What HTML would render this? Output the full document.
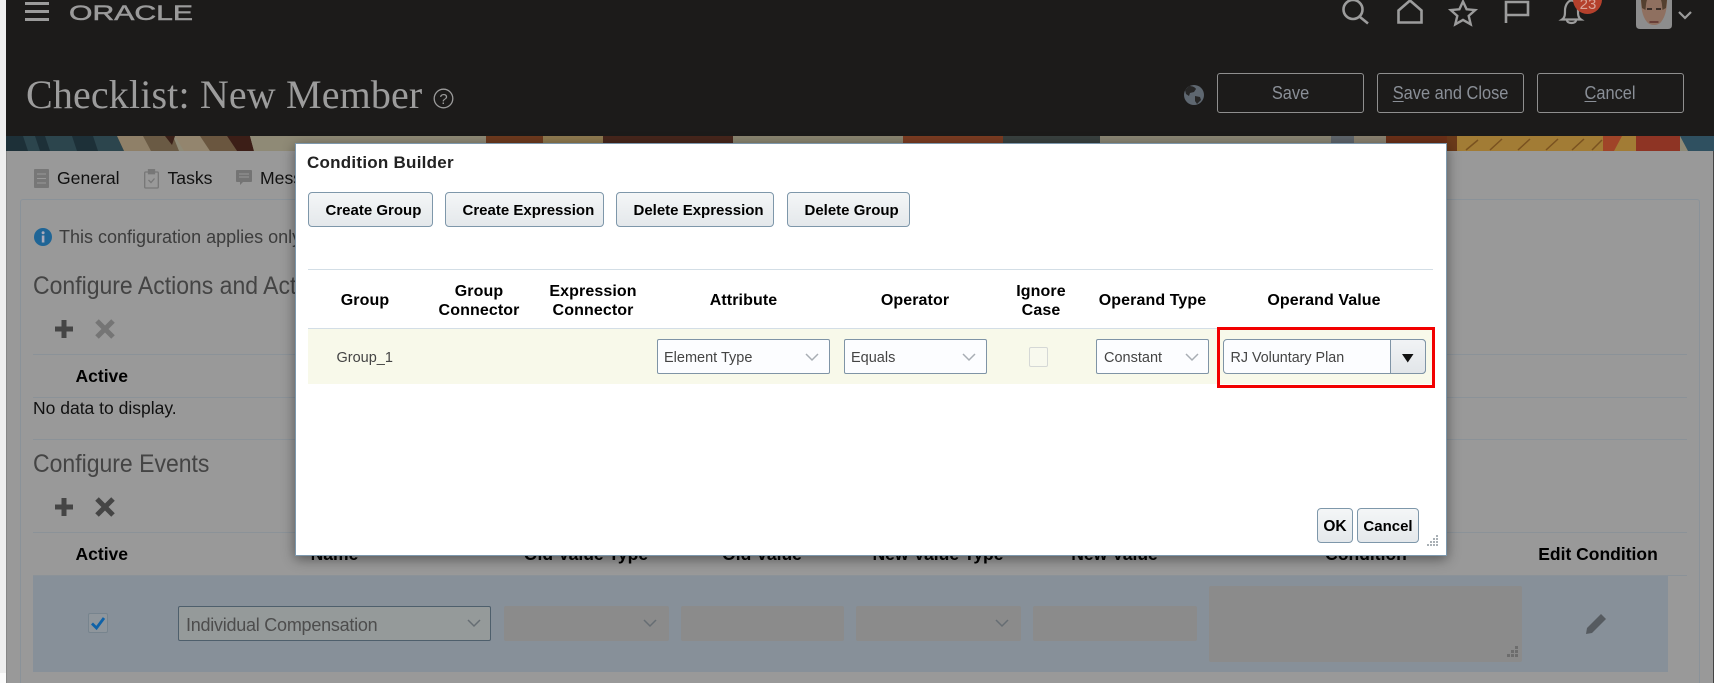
<!DOCTYPE html>
<html><head><meta charset="utf-8"><title>Checklist: New Member</title>
<style>
html,body{margin:0;padding:0;background:#fff}
#p{position:relative;width:1714px;height:683px;overflow:hidden;background:#999;font-family:"Liberation Sans",Arial,sans-serif}
#p div{position:absolute}
.t{position:absolute;white-space:nowrap;line-height:20px;height:20px}
.c{transform:translateX(-50%)}
.b{font-weight:bold;color:#000;font-size:16px;letter-spacing:.1px}
.bg{font-weight:bold;color:#000;font-size:17.5px}
.l{background:#8b9298;height:1px;left:33px;width:1654px}
.hb{border:1px solid #8f8f8f;border-radius:3px;box-sizing:border-box;top:73px;height:40px;width:147px;color:#8a8f97;font-size:18px;line-height:38px;text-align:center}
.hb span{display:inline-block;transform:scaleX(.91)}
.hb u{text-underline-offset:2px}
.btn{box-sizing:border-box;border:1px solid #7e97aa;border-radius:4px;background:linear-gradient(#f4f6f7,#e4e8eb);font-weight:bold;font-size:15px;color:#000;top:192px;height:35px;line-height:36px;padding-left:16.5px;white-space:nowrap}
.bt2{text-align:center;padding-left:0}
.sel{box-sizing:border-box;border:1px solid #7f94a6;background:#fcfdff;top:339px;height:35px;border-radius:2px;color:#444;font-size:14.5px;line-height:36px;padding-left:6px}
.dis{background:#8b8b8b;top:606px;height:35px;border-radius:2px}
.h2{height:30px;line-height:30px;font-size:25px;color:#444;transform:scaleX(.92);transform-origin:0 0}
svg{position:absolute;overflow:visible}
</style></head><body><div id="p">

<div style="left:0;top:0;width:6px;height:50px;background:#f0f0f0"></div>
<div style="left:0;top:50px;width:6px;height:623px;background:#eeeeee"></div>
<div style="left:0;top:673px;width:6px;height:10px;background:#fbfbfb"></div>
<div style="left:6px;top:151px;width:1px;height:532px;background:#868686"></div>
<div style="left:1713px;top:136px;width:1px;height:547px;background:#444"></div>

<!-- header -->
<div style="left:6px;top:0;width:1708px;height:136px;background:#1c1b1a"></div>
<!-- banner -->
<svg style="left:6px;top:136px" width="1708" height="15" viewBox="6 136 1708 15" preserveAspectRatio="none">
<rect x="6" y="136" width="1708" height="15" fill="#8f8a76"/>
<rect x="6" y="136" width="120" height="15" fill="#1d3038"/>
<path d="M23 136h12l5 15H28zM45 136h27l5 15H50zM93 136h24l7 15H98z" fill="#2c454d"/>
<path d="M117 136h48l9 15h-50z" fill="#8f8068"/>
<path d="M143 136h30l6 15h-28z" fill="#6a5a44"/>
<path d="M165 136h10l-3 9z" fill="#3a2018"/>
<path d="M175 136h25l10 15h-26z" fill="#93856e"/>
<path d="M200 136h27l10 15h-27z" fill="#6a563f"/>
<path d="M227 136h23l4 15h-17z" fill="#3c1e17"/>
<path d="M250 136h50v15h-46z" fill="#8f8a76"/>
<rect x="486" y="136" width="57" height="8" fill="#6e3a1e"/>
<rect x="543" y="136" width="60" height="8" fill="#8f7a50"/>
<rect x="603" y="136" width="130" height="8" fill="#47261c"/>
<rect x="733" y="136" width="170" height="8" fill="#8a8570"/>
<rect x="903" y="136" width="100" height="8" fill="#7b3c22"/>
<rect x="1003" y="136" width="97" height="8" fill="#39413f"/>
<rect x="1100" y="136" width="231" height="8" fill="#8a8674"/>
<rect x="1331" y="136" width="23" height="8" fill="#5f666c"/>
<rect x="1354" y="136" width="32" height="8" fill="#8a8270"/>
<rect x="1386" y="136" width="61" height="8" fill="#6b3018"/>
<rect x="1447" y="136" width="10" height="15" fill="#6b3a1a"/>
<rect x="1457" y="136" width="146" height="15" fill="#a27c35"/>
<path d="M1466 150l12-10M1490 150l12-11M1518 150l12-11M1546 150l12-11M1572 150l12-11M1592 150l10-10" stroke="#7a5220" stroke-width="1.500" fill="none"/>
<path d="M1603 136h33v15h-33z" fill="#a04428"/>
<path d="M1622 136h14v15h-22z" fill="#a27c35"/>
<rect x="1636" y="136" width="44" height="15" fill="#8e3424"/>
<path d="M1680 136h34v15h-26z" fill="#2f5060"/>
</svg>

<!-- hamburger -->
<div style="left:25px;top:2px;width:24px;height:3px;background:#9b9b9b"></div>
<div style="left:25px;top:9.5px;width:24px;height:3px;background:#9b9b9b"></div>
<div style="left:25px;top:17.5px;width:24px;height:3px;background:#9b9b9b"></div>
<!-- logo -->
<svg style="left:0;top:0" width="300" height="30"><text x="69" y="20" font-family="Liberation Sans" font-size="21.5" fill="#9b9b9b" stroke="#9b9b9b" stroke-width=".5" textLength="124" lengthAdjust="spacingAndGlyphs">ORACLE</text></svg>

<!-- title -->
<div class="t" style="left:26px;top:72px;height:46px;line-height:46px;font-family:'Liberation Serif',serif;font-size:40px;color:#9c9c9c;letter-spacing:.15px">Checklist: New Member</div>
<svg style="left:433px;top:88px" width="21" height="21" viewBox="0 0 21 21"><circle cx="10.5" cy="10.5" r="9.3" fill="none" stroke="#9b9b9b" stroke-width="1.3"/><text x="10.5" y="16" text-anchor="middle" font-family="Liberation Sans" font-size="15" fill="#9b9b9b">?</text></svg>

<!-- top icons -->
<svg style="left:0;top:0" width="1714" height="32" fill="none" stroke="#9c9c9c" stroke-width="2.6">
<circle cx="1353" cy="9.5" r="9.5"/><path d="M1360 17l8 6.5"/>
<path d="M1398.5 22.5V10.5L1410 .5l11.5 10v12z"/>
<path d="M1463 1.5l3.6 7.8 8.6 .8-6.5 5.8 2 8.4-7.7-4.4-7.7 4.4 2-8.4-6.500-5.800 8.600-.8z" stroke-width="2.4"/>
<path d="M1506 23V2h22v13h-22" stroke-width="2.6"/>
<path d="M1562 19.5c3-2 3-5 3-9 0-5 3-10 6.5-10s6.500 5 6.500 10c0 4 0 7 3 9zM1567 20c0 4 9 4 9 0" stroke-width="2.2"/>
<path d="M1679 12l6 6 6-6" stroke-width="2.2"/>
</svg>
<div style="left:1573px;top:-15px;width:29px;height:29px;border-radius:50%;background:#b4402c"></div>
<div class="t c" style="left:1588px;top:-5px;font-size:15px;color:#d9a59a">23</div>
<svg style="left:1636px;top:0" width="36" height="29" viewBox="0 0 36 29">
<path d="M0 0h36v25q0 4-4 4H4q-4 0-4-4z" fill="#8d8d8d"/>
<path d="M5 0c0 7 1 16 6 22 3 4 11 4 14 0 5-6 6-15 6-22z" fill="#8f7060"/>
<path d="M5 0h6c-1 3-1 5-1.500 10L6 8zM31 0h-6c1 3 1 5 1.500 10L30 8z" fill="#54402f"/>
<path d="M11 9h5M20 9h5" stroke="#2f2420" stroke-width="1.800"/>
<path d="M13.500 22h9" stroke="#5b2f2a" stroke-width="1.500"/>
</svg>

<!-- globe and header buttons -->
<svg style="left:1184px;top:85px" width="20" height="20" viewBox="0 0 20 20"><circle cx="10" cy="10" r="10" fill="#5e6770"/><path d="M5 1c3 0 6 1 7 3l-2 3-4 1-1 3-3-2-1-4zM11 11l5 1 1 3-4 4-2-3z" fill="#262626"/></svg>
<div class="hb" style="left:1217px"><span>Save</span></div>
<div class="hb" style="left:1377px"><span><u>S</u>ave and Close</span></div>
<div class="hb" style="left:1537px"><span><u>C</u>ancel</span></div>

<!-- panel -->
<div style="left:20px;top:199px;width:1680px;height:490px;border:1px solid #8a9299;border-radius:3px;box-sizing:border-box"></div>

<!-- tabs -->
<svg style="left:34px;top:169px" width="15" height="19" viewBox="0 0 15 19"><rect width="15" height="19" rx="1" fill="#777"/><path d="M3 5h9M3 9.500h9M3 14h9" stroke="#999" stroke-width="1"/></svg>
<div class="t" style="left:57px;top:168px;font-size:17.6px;color:#111">General</div>
<svg style="left:144px;top:169px" width="15" height="20" viewBox="0 0 15 20" fill="none" stroke="#777" stroke-width="1.300"><rect x=".7" y="3" width="13.600" height="16" rx="1"/><rect x="4.500" y=".7" width="6" height="4" fill="#777"/><path d="M4.500 11l2.500 2.500 3.500-4"/></svg>
<div class="t" style="left:167.500px;top:168px;font-size:17.6px;color:#111">Tasks</div>
<svg style="left:236px;top:170px" width="16" height="16" viewBox="0 0 16 16"><path d="M1 0h14a1 1 0 0 1 1 1v10a1 1 0 0 1-1 1H7l-3 3v-3H1a1 1 0 0 1-1-1V1a1 1 0 0 1 1-1z" fill="#747474"/><path d="M3 4h10M3 7h10" stroke="#999"/></svg>
<div class="t" style="left:260px;top:168px;font-size:17.6px;color:#111">Messages</div>

<svg style="left:34px;top:228px" width="18" height="18" viewBox="0 0 18 18"><circle cx="9" cy="9" r="9" fill="#1f6596"/><rect x="7.800" y="7.500" width="2.600" height="7" fill="#aab"/><circle cx="9.100" cy="4.700" r="1.500" fill="#aab"/></svg>
<div class="t" style="left:59px;top:227px;font-size:18px;color:#3c3c3c">This configuration applies only</div>

<div class="t h2" style="left:33px;top:271px">Configure Actions and Actions</div>
<svg style="left:55px;top:320px" width="60" height="18" viewBox="0 0 60 18"><path d="M9 0v18M0 9h18" stroke="#454545" stroke-width="5"/><path d="M42 1l16 16M58 1L42 17" stroke="#757575" stroke-width="5"/></svg>
<div class="l" style="top:354px"></div>
<div class="t bg" style="left:75.500px;top:366px">Active</div>
<div class="l" style="top:397px"></div>
<div class="t" style="left:33px;top:398px;font-size:17.500px;color:#111">No data to display.</div>
<div class="l" style="top:439px"></div>
<div class="t h2" style="left:33px;top:449px">Configure Events</div>
<svg style="left:55px;top:498px" width="60" height="18" viewBox="0 0 60 18"><path d="M9 0v18M0 9h18" stroke="#454545" stroke-width="5"/><path d="M42 1l16 16M58 1L42 17" stroke="#454545" stroke-width="5"/></svg>
<div class="l" style="top:532px"></div>
<div class="t bg" style="left:75.500px;top:544px">Active</div>
<div class="t bg c" style="left:334.500px;top:544px">Name</div>
<div class="t bg c" style="left:586px;top:544px">Old Value Type</div>
<div class="t bg c" style="left:762px;top:544px">Old Value</div>
<div class="t bg c" style="left:938px;top:544px">New Value Type</div>
<div class="t bg c" style="left:1114.500px;top:544px">New Value</div>
<div class="t bg c" style="left:1366px;top:544px">Condition</div>
<div class="t bg c" style="left:1598px;top:544px">Edit Condition</div>
<div class="l" style="top:575px"></div>

<!-- data row -->
<div style="left:33px;top:576px;width:1635px;height:96px;background:#879099"></div>
<div style="left:88px;top:613px;width:20px;height:20px;box-sizing:border-box;border:1px solid #77848e;border-radius:2px;background:#8f969c"></div>
<svg style="left:88px;top:613px" width="20" height="20" viewBox="0 0 20 20" fill="none"><path d="M4 10.500l4.500 4.500L16 5" stroke="#0f62a8" stroke-width="2.800"/></svg>
<div style="left:178px;top:606px;width:313px;height:35px;box-sizing:border-box;border:1px solid #4e5f6c;border-radius:2px;background:#959a9a"></div>
<div class="t" style="left:186px;top:614px;height:22px;line-height:22px;font-size:18px;color:#4d4d4d;letter-spacing:-.25px">Individual Compensation</div>
<div class="dis" style="left:504px;width:165px"></div>
<div class="dis" style="left:681px;width:163px"></div>
<div class="dis" style="left:856px;width:165px"></div>
<div class="dis" style="left:1033px;width:164px"></div>
<div class="dis" style="left:1209px;top:586px;width:313px;height:76px"></div>
<svg style="left:0;top:603px" width="1714" height="30" fill="none" stroke="#666d73" stroke-width="1.500">
<path d="M468 17l6 6 6-6M644 17l6 6 6-6M996 17l6 6 6-6"/>
</svg>
<svg style="left:1506px;top:646px" width="13" height="13" viewBox="0 0 13 13" fill="#6d6d6d"><path d="M9 0h3v3H9zM5 4h3v3H5zM9 4h3v3H9zM1 8h3v3H1zM5 8h3v3H5zM9 8h3v3H9z"/></svg>
<svg style="left:1586px;top:613px" width="21" height="21" viewBox="0 0 21 21"><path d="M0 21l1-6L15 1l5 5L6 20z" fill="#565b60"/></svg>

<!-- dialog -->
<div style="left:295px;top:143px;width:1152px;height:413px;box-sizing:border-box;background:#fff;border:1px solid #7d98ad;box-shadow:0 3px 12px rgba(0,0,0,.45)"></div>
<div class="t" style="left:307px;top:153px;font-size:17px;font-weight:bold;color:#222;letter-spacing:.25px">Condition Builder</div>

<div class="btn" style="left:308px;width:125px">Create Group</div>
<div class="btn" style="left:445px;width:159px;">Create Expression</div>
<div class="btn" style="left:616px;width:158px">Delete Expression</div>
<div class="btn" style="left:787px;width:123px">Delete Group</div>

<div style="left:308px;top:269px;width:1125px;height:1px;background:#d3dee6"></div>
<div style="left:308px;top:328px;width:1125px;height:1px;background:#d3dee6"></div>
<div style="left:308px;top:329px;width:1125px;height:55px;background:#f8f9ea"></div>

<div class="t b c" style="left:365px;top:291px">Group</div>
<div class="t b c" style="left:479px;top:281.500px">Group</div>
<div class="t b c" style="left:479px;top:300.500px">Connector</div>
<div class="t b c" style="left:593px;top:281.500px">Expression</div>
<div class="t b c" style="left:593px;top:300.500px">Connector</div>
<div class="t b c" style="left:743.500px;top:291px">Attribute</div>
<div class="t b c" style="left:915px;top:291px">Operator</div>
<div class="t b c" style="left:1041px;top:281.500px">Ignore</div>
<div class="t b c" style="left:1041px;top:300.500px">Case</div>
<div class="t b c" style="left:1152.500px;top:291px">Operand Type</div>
<div class="t b c" style="left:1324px;top:291px">Operand Value</div>

<div class="t c" style="left:364.700px;top:348px;font-size:14.500px;color:#444">Group_1</div>
<div class="sel" style="left:657px;width:173px">Element Type</div>
<div class="sel" style="left:844px;width:143px">Equals</div>
<div style="left:1029px;top:347px;width:19px;height:20px;box-sizing:border-box;border:1px solid #d5d8d6;border-radius:2px;background:#f8f9ee"></div>
<div class="sel" style="left:1096px;width:113px;padding-left:7px">Constant</div>
<svg style="left:0;top:331px" width="1714" height="40" fill="none" stroke="#a8aeb4" stroke-width="1.500">
<path d="M806 23l6 6 6-6M963 23l6 6 6-6M1186 23l6 6 6-6"/>
</svg>
<div class="sel" style="left:1223px;width:203px;border-radius:4px;padding-left:6.500px;font-size:14.300px">RJ Voluntary Plan</div>
<div style="left:1390px;top:339px;width:36px;height:35px;box-sizing:border-box;border:1px solid #7f94a6;border-radius:0 4px 4px 0;background:linear-gradient(#f1f3f5,#e2e6e9)"></div>
<svg style="left:1402px;top:353px" width="12" height="10" viewBox="0 0 12 10"><path d="M0 1h11.500L5.750 9.500z" fill="#111"/></svg>
<div style="left:1217px;top:327px;width:218px;height:61px;box-sizing:border-box;border:3px solid #f20000"></div>

<div class="btn bt2" style="left:1317px;top:508px;width:36px;font-size:15.500px">OK</div>
<div class="btn bt2" style="left:1357px;top:508px;width:62px">Cancel</div>
<svg style="left:1426px;top:535px" width="13" height="13" viewBox="0 0 13 13" fill="#a9b0b5"><path d="M10 0h2v2h-2zM7 3h2v2H7zM10 3h2v2h-2zM4 6h2v2H4zM7 6h2v2H7zM10 6h2v2h-2zM1 9h2v2H1zM4 9h2v2H4zM7 9h2v2H7zM10 9h2v2h-2z"/></svg>
</div></body></html>
